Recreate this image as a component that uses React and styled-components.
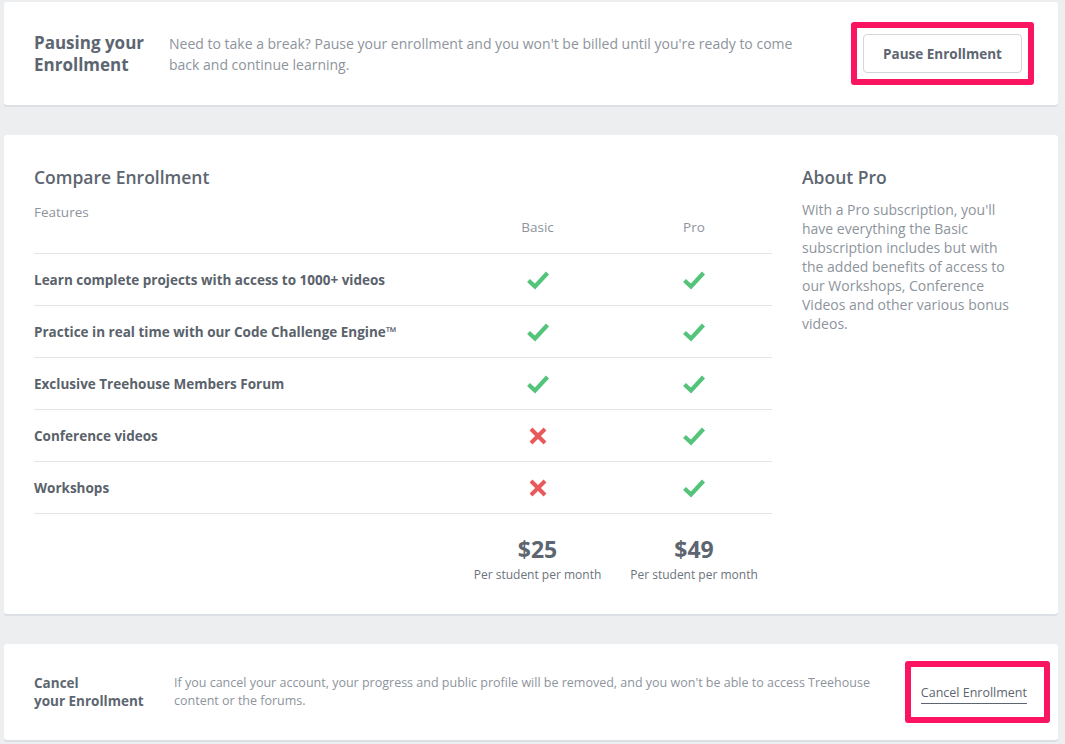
import React from "react";
import styled, { createGlobalStyle } from "styled-components";

const GlobalStyle = createGlobalStyle`
  body {
    margin: 0;
    background: #edeef0;
    font-family: "Open Sans", "Liberation Sans", sans-serif;
    color: #5d6670;
  }
`;

// page column
const Page = styled.div`
  display: flex;
  flex-direction: column;
  gap: 30px;
  padding: 2px 7px 4px 4px;
`;

const Card = styled.section`
  background: #fff;
  border-radius: 3px;
  box-shadow: 0 2px 0 #dcdfe3;
`;

// top and bottom strips
const Strip = styled(Card)`
  display: flex;
  align-items: center;
  height: ${(p) => p.h}px;
  padding: 0 ${(p) => p.pr}px 0 30px;
`;

const StripTitle = styled.h3`
  margin: 0;
  flex: 0 0 ${(p) => p.w}px;
  font-size: ${(p) => p.size}px;
  line-height: ${(p) => p.lh}px;
  font-weight: 700;
  color: #5d6670;
`;

const StripText = styled.p`
  margin: 0;
  flex: 1;
  font-size: ${(p) => p.size}px;
  line-height: ${(p) => p.lh}px;
  color: #8d949c;
  padding-right: ${(p) => p.gap}px;
`;

// pink frame around the actions
const Highlight = styled.div`
  flex: none;
  border: 6px solid #fb1561;
  border-radius: 3px;
  padding: ${(p) => p.pad};
  background: #fff;
`;

const GhostButton = styled.button`
  display: block;
  width: 159px;
  height: 39px;
  border: 1px solid #d3d6da;
  border-radius: 4px;
  background: #fff;
  font-family: inherit;
  font-size: 13.5px;
  font-weight: 700;
  color: #5d6670;
  cursor: pointer;
`;

const TextLink = styled.a`
  display: inline-block;
  font-size: 12.5px;
  line-height: 18px;
  color: #5d6670;
  text-decoration: none;
  border-bottom: 1px solid #5d6670;
  padding-bottom: 1px;
  cursor: pointer;
`;

// compare card
const CompareCard = styled(Card)`
  display: grid;
  grid-template-columns: 738px 214px;
  column-gap: 30px;
  padding: 30px 24px 30px 30px;
`;

const Heading = styled.h2`
  margin: 0;
  font-size: 17.5px;
  line-height: 24px;
  font-weight: 600;
  color: #5d6670;
`;

const Table = styled.div`
  display: grid;
  grid-template-columns: 425px 157px 156px;
  margin-top: 13px;
`;

const HeadCell = styled.div`
  height: 52px;
  box-sizing: border-box;
  border-bottom: 1px solid #e3e5e8;
  font-size: 13.5px;
  color: #8d949c;
  text-align: ${(p) => (p.center ? "center" : "left")};
  padding-top: ${(p) => (p.center ? 16 : 1)}px;
`;

const Cell = styled.div`
  height: 52px;
  box-sizing: border-box;
  border-bottom: 1px solid #e3e5e8;
  display: flex;
  align-items: center;
  justify-content: ${(p) => (p.center ? "center" : "flex-start")};
  font-size: 13.5px;
  font-weight: 700;
  color: #5a626b;
`;

const PriceCell = styled.div`
  grid-column: ${(p) => p.col};
  text-align: center;
  padding-top: 21px;
`;

const Price = styled.div`
  font-size: 23px;
  line-height: 28px;
  font-weight: 700;
  color: #5d6670;
`;

const PriceNote = styled.div`
  font-size: 12px;
  line-height: 18px;
  color: #6b737c;
  margin-top: 3px;
`;

const About = styled.aside``;

const AboutText = styled.p`
  margin: 11px 0 0;
  font-size: 14px;
  line-height: 19px;
  color: #8d949c;
`;

const Check = () => (
  <svg width="24" height="20" viewBox="0 0 24 20">
    <path d="M2.5 10.5 L9 16.5 L21.5 3" fill="none" stroke="#55c47b" strokeWidth="4.2" />
  </svg>
);

const Cross = () => (
  <svg width="18" height="18" viewBox="0 0 18 18">
    <path d="M2 2 L16 16 M16 2 L2 16" fill="none" stroke="#e9585a" strokeWidth="4" />
  </svg>
);

const features = [
  ["Learn complete projects with access to 1000+ videos", true, true],
  ["Practice in real time with our Code Challenge Engine™", true, true],
  ["Exclusive Treehouse Members Forum", true, true],
  ["Conference videos", false, true],
  ["Workshops", false, true],
];

export default function App() {
  return (
    <>
      <GlobalStyle />
      <Page>
        <Strip h={103} pr={24}>
          <StripTitle w={135} size={17} lh={22}>
            Pausing your Enrollment
          </StripTitle>
          <StripText size={14} lh={21} gap={34}>
            Need to take a break? Pause your enrollment and you won't be billed until you're ready to come
            back and continue learning.
          </StripText>
          <Highlight pad="6px">
            <GhostButton>Pause Enrollment</GhostButton>
          </Highlight>
        </Strip>

        <CompareCard>
          <div>
            <Heading>Compare Enrollment</Heading>
            <Table>
              <HeadCell>Features</HeadCell>
              <HeadCell center>Basic</HeadCell>
              <HeadCell center>Pro</HeadCell>
              {features.map(([name, basic, pro]) => (
                <React.Fragment key={name}>
                  <Cell>{name}</Cell>
                  <Cell center>{basic ? <Check /> : <Cross />}</Cell>
                  <Cell center>{pro ? <Check /> : <Cross />}</Cell>
                </React.Fragment>
              ))}
              <PriceCell col={2}>
                <Price>$25</Price>
                <PriceNote>Per student per month</PriceNote>
              </PriceCell>
              <PriceCell col={3}>
                <Price>$49</Price>
                <PriceNote>Per student per month</PriceNote>
              </PriceCell>
            </Table>
          </div>
          <About>
            <Heading>About Pro</Heading>
            <AboutText>
              With a Pro subscription, you'll have everything the Basic subscription includes but with the
              added benefits of access to our Workshops, Conference Videos and other various bonus videos.
            </AboutText>
          </About>
        </CompareCard>

        <Strip h={96} pr={8}>
          <StripTitle w={140} size={13.5} lh={18}>
            Cancel
            <br />
            your Enrollment
          </StripTitle>
          <StripText size={12.5} lh={18} gap={8}>
            If you cancel your account, your progress and public profile will be removed, and you won't be
            able to access Treehouse content or the forums.
          </StripText>
          <Highlight pad="13px 17px 13px 10px">
            <TextLink>Cancel Enrollment</TextLink>
          </Highlight>
        </Strip>
      </Page>
    </>
  );
}
